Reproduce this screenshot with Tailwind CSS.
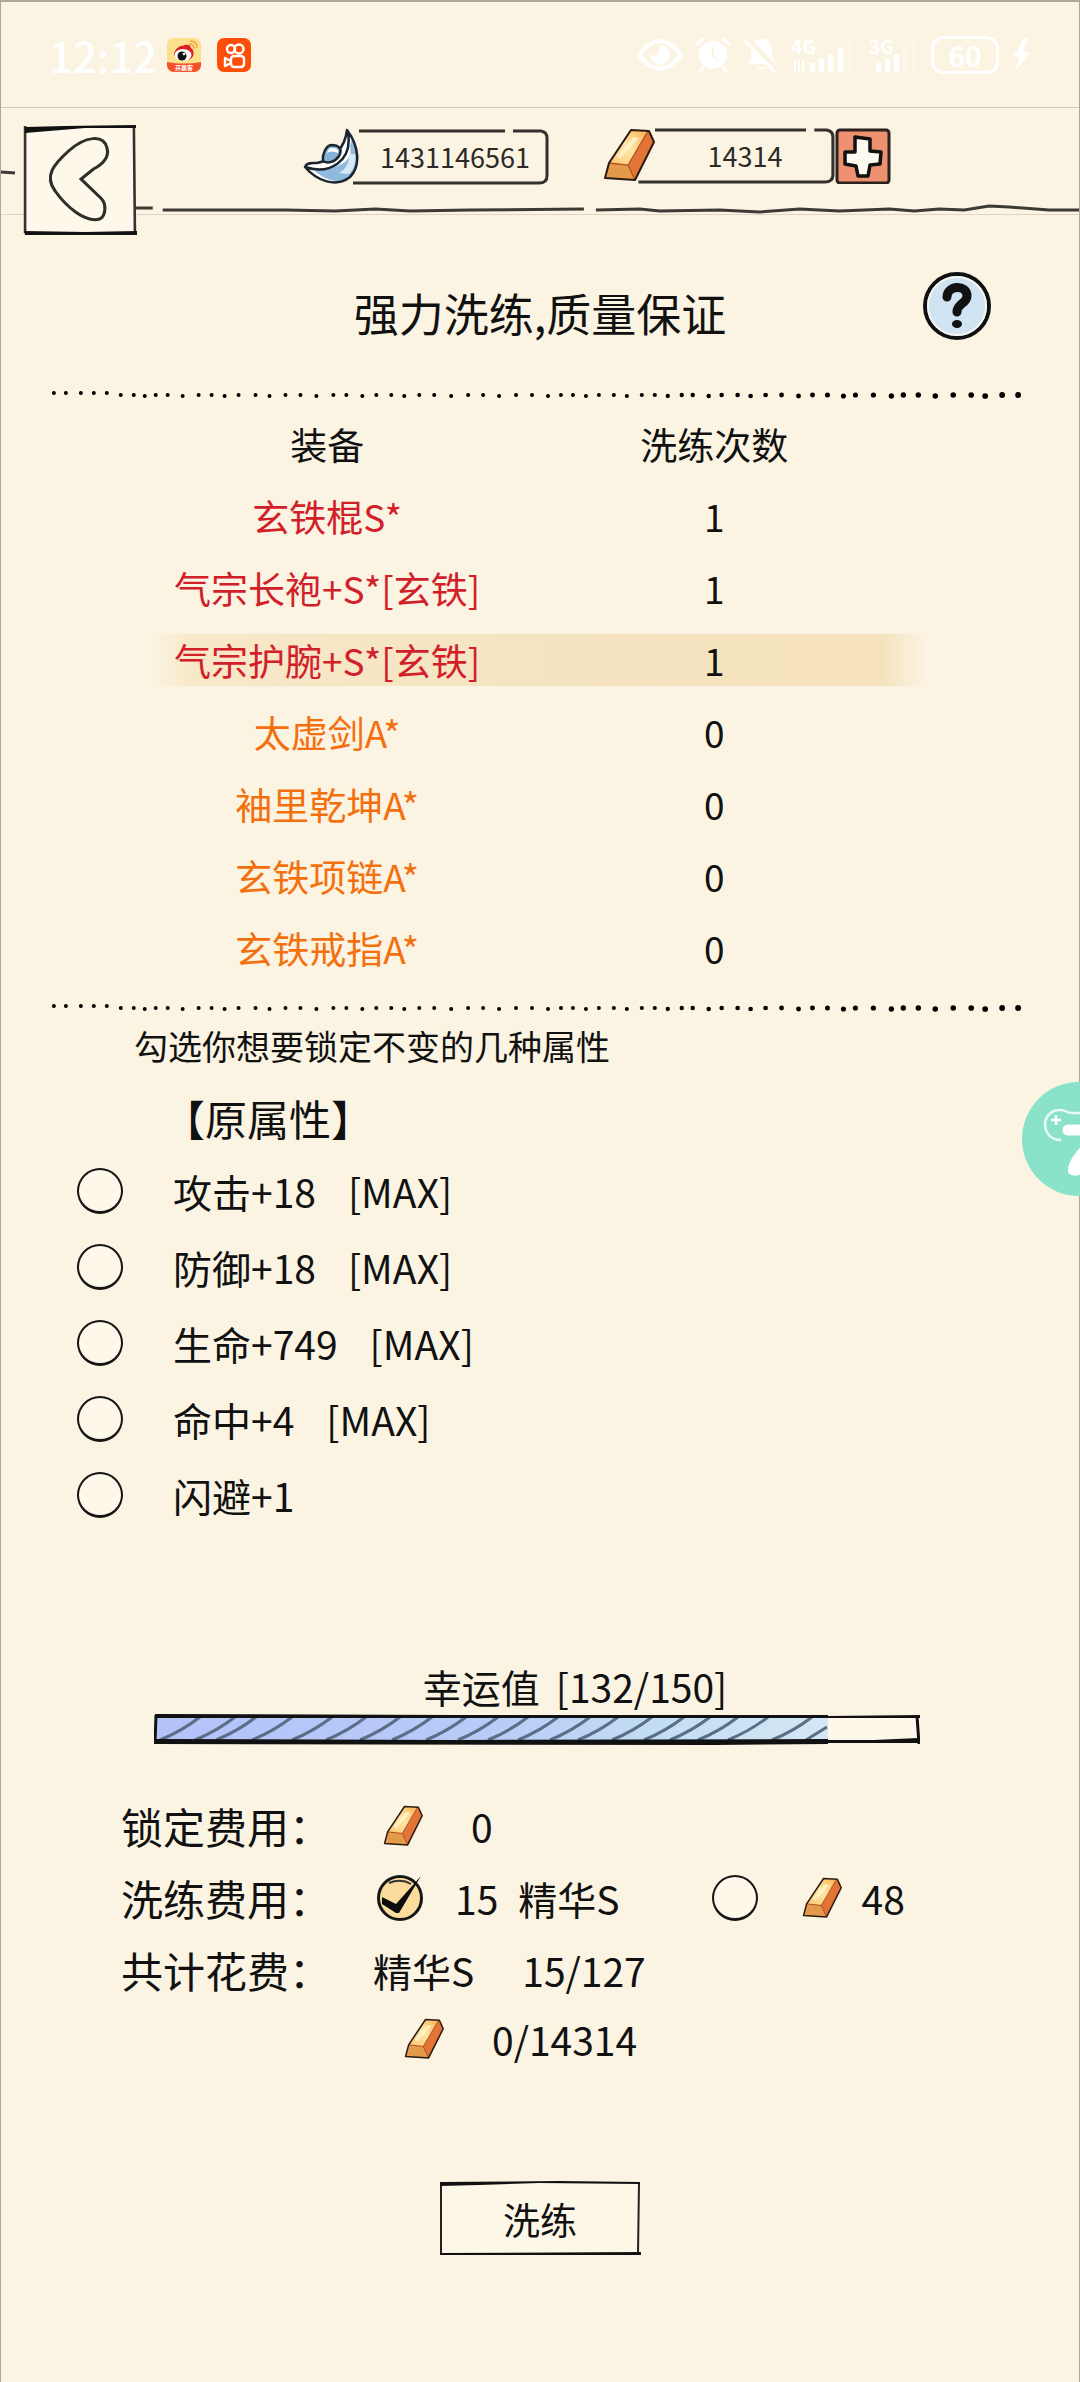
<!DOCTYPE html>
<html lang="zh-CN">
<head>
  <meta charset="UTF-8">
  <meta name="viewport" content="width=device-width, initial-scale=1.0">
  <title>强力洗练</title>
  <script src="https://cdn.jsdelivr.net/npm/@tailwindcss/browser@4"></script>
</head>
<body class="bg-[#fbf4e2] text-[#111] font-['Noto_Sans_CJK_SC','Noto_Sans',sans-serif] min-h-screen overflow-x-hidden border-t-2 border-x border-[#aea697]">

  <!-- Shared drawings -->
  <svg class="absolute w-0 h-0" aria-hidden="true">
    <defs>
      <linearGradient id="goldTop" x1="0" y1="1" x2="1" y2="0">
        <stop offset="0" stop-color="#fbc46c"/>
        <stop offset="0.5" stop-color="#ffe6a4"/>
        <stop offset="1" stop-color="#fdb352"/>
      </linearGradient>
      <linearGradient id="luckFill" x1="0" x2="1">
        <stop offset="0" stop-color="#b3c3fa"/>
        <stop offset="0.5" stop-color="#b9cbf8"/>
        <stop offset="0.75" stop-color="#c3def3"/>
        <stop offset="1" stop-color="#d3e7f5"/>
      </linearGradient>
      <symbol id="gold" viewBox="0 0 52 56">
        <path d="M28 2 46 3 51 14 32 52 2 50 6 35Z" fill="#e27438"/>
        <path d="M28 2 45 3 25 37 6 35Z" fill="url(#goldTop)"/>
        <path d="M30 9 36 10 17 31 14 28Z" fill="#fff3cf" opacity=".8"/>
        <path d="M6 35 25 37 32 52 2 50Z" fill="#e49a4b"/>
        <path d="M6 35 25 37 32 52M25 37 45 3" fill="none" stroke="#b0521f" stroke-width="1.3"/>
        <path d="M28 2 46 3 51 14 32 52 2 50 6 35Z" fill="none" stroke="#2a1a10" stroke-width="2" stroke-linejoin="round"/>
      </symbol>
    </defs>
  </svg>

  <!-- Status bar -->
  <div class="h-[106px] flex items-center pl-12 pr-12 border-b border-[#d2cbbb] text-white">
    <span class="text-[42px] leading-[60px] font-medium">12:12</span>
    <svg class="w-[34px] h-[34px] ml-2.5" viewBox="0 0 34 34">
      <defs><clipPath id="wb"><rect width="34" height="34" rx="7"/></clipPath></defs>
      <g clip-path="url(#wb)">
        <rect width="34" height="34" fill="#fde08c"/>
        <path d="M0 24Q17 27 34 24V34H0Z" fill="#f4502c"/>
        <path d="M7 16C8 11 13 7 16 8 18 6 24 6 24 10 27 12 27 16 26 18 24 24 8 24 7 16Z" fill="#dd1f26"/>
        <ellipse cx="16" cy="17" rx="8.500" ry="6" fill="#fff"/>
        <circle cx="15" cy="18" r="4.500" fill="#111"/>
        <circle cx="17" cy="16" r="1.300" fill="#fff"/>
        <path d="M22 6Q27 6 27 11M23 3Q30 3 30 10" fill="none" stroke="#eba646" stroke-width="1.500"/>
        <text x="17" y="32" font-size="6" font-weight="700" fill="#fff" text-anchor="middle">开赢客</text>
      </g>
    </svg>
    <svg class="w-[34px] h-[34px] ml-4" viewBox="0 0 34 34">
      <rect width="34" height="34" rx="7" fill="#fd4f0a"/>
      <g fill="none" stroke="#fff" stroke-width="2.400" stroke-linejoin="round">
        <circle cx="14" cy="11" r="4"/><circle cx="22" cy="11" r="4.500"/>
        <rect x="14" y="18" width="13" height="11" rx="3"/>
        <path d="M14 23 8 20V28L14 25"/>
      </g>
    </svg>
    <div class="ml-auto flex items-center gap-3">
      <svg class="w-[46px] h-[34px]" viewBox="0 0 46 34" fill="#fff">
        <path d="M2 17Q23-11 44 17 23 45 2 17Z" fill="none" stroke="#fff" stroke-width="4"/>
        <path d="M23 7a10 10 0 1 1-10 10q6 2 8-2t2-8Z"/>
      </svg>
      <svg class="w-9 h-9" viewBox="0 0 36 36" fill="none" stroke="#fff" stroke-width="3" stroke-linecap="round">
        <circle cx="18" cy="18" r="14" fill="#fff" stroke="none"/>
        <path d="M2 7 8 2M34 7 28 2M8 31 5 34M28 31 31 34"/>
        <path d="M18 11V18L22 23" stroke="#fbf4e2" stroke-width="2"/>
      </svg>
      <svg class="w-9 h-9" viewBox="0 0 36 36" fill="#fff">
        <path d="M18 2c7 0 11 5 11 11v7l4 7H5l3-7v-7C8 7 12 2 18 2ZM14 30h9q-4 6-9 0Z"/>
        <path d="M4 2 34 33" stroke="#fbf4e2" stroke-width="6"/>
        <path d="M2 4 32 35" stroke="#fff" stroke-width="3"/>
      </svg>
      <svg class="w-[66px] h-[52px]" viewBox="0 -8 66 52" fill="#fff">
        <text x="0" y="17" font-size="19" font-weight="700">4G</text>
        <path d="M4 23V35M8 23V35M12 23V35" stroke="#fff" stroke-width="2"/>
        <path d="M19 26h5v9h-5ZM28 22h5v13h-5ZM37 17h5v18h-5ZM47 10h5v25h-5Z"/>
        <path d="M57 2h5v33h-5Z" opacity=".25"/>
      </svg>
      <svg class="w-[50px] h-[52px]" viewBox="0 -8 50 52" fill="#fff">
        <text x="0" y="17" font-size="19" font-weight="700">3G</text>
        <path d="M7 26h5v9H7ZM16 22h5v13h-5ZM25 17h5v18h-5Z"/>
        <path d="M34 10h5v25h-5ZM43 2h5v33h-5Z" opacity=".25"/>
      </svg>
      <div class="w-[68px] h-[38px] border-3 border-white rounded-xl flex items-center justify-center text-[28px] leading-8 font-bold">60</div>
      <svg class="w-5 h-9" viewBox="0 0 20 36" fill="#fff"><path d="M14 0 2 20H9L3 36 19 15H12L17 2Z"/></svg>
    </div>
  </div>

  <!-- Currency header -->
  <header class="relative h-[107px] flex items-start border-b border-[#ddd6c6] pl-[22px]">
    <svg class="absolute left-0 top-[90px] w-full h-5" viewBox="0 0 1080 20" preserveAspectRatio="none" fill="none" stroke="#3c3a35" stroke-width="3">
      <path d="M131 10h21M162 12H285L335 13 375 11 410 13 470 12 584 11M596 12 640 11 660 13 720 12 760 14 800 11 840 13 890 11 915 13 940 11 965 12 990 8 1010 9 1050 12H1080"/>
    </svg>
    <svg class="absolute left-0 top-[60px] w-[22px] h-2" viewBox="0 0 22 8" stroke="#3c3a35" stroke-width="3"><path d="M0 4 14 5"/></svg>

    <button type="button" aria-label="返回" class="relative mt-4 w-[114px] h-[112px]">
      <svg class="w-full h-full" viewBox="0 0 110 112" preserveAspectRatio="none">
        <path d="M2 3 108 2V108H2Z" fill="#fdf8ea"/>
        <path d="M2 2V109M107 4 108 108" stroke="#333" stroke-width="2.500"/>
        <path d="M2 3 40 2 109 1V4L60 4 2 9Z" fill="#111"/>
        <path d="M1 107 60 108 110 107V111H2Z" fill="#111"/>
        <path d="M44 27C60 12 78 10 81 24 84 33 76 41 68 45L56 55 75 74C81 80 80 92 74 95 60 99 42 83 31 67 20 52 30 40 44 27Z" fill="none" stroke="#2e2e2b" stroke-width="3"/>
      </svg>
    </button>

    <div class="relative ml-[166px] mt-5 flex items-center">
      <svg class="w-[58px] h-[58px]" viewBox="0 0 58 58">
        <path d="M44 2C56 18 58 38 47 49 33 60 14 53 2 39 4 34 10 35 14 35 30 32 42 20 44 2Z" fill="#fff"/>
        <path d="M47 18C51 34 34 42 10 41 22 53 36 57 47 48 56 40 55 24 49 11Z" fill="#8fb9de"/>
        <path d="M46 26Q47 39 36 45L46 46Q54 38 52 26Z" fill="#d8e9f5"/>
        <path d="M44 2C56 18 58 38 47 49 33 60 14 53 2 39 4 34 10 35 14 35 30 32 42 20 44 2ZM2 39C26 47 50 34 45 4" fill="none" stroke="#1c2430" stroke-width="2.500" stroke-linejoin="round"/>
        <path d="M20 33C19 26 23 18 28 17 36 17 40 21 36 28 32 34 25 36 20 33Z" fill="#86b2d9" stroke="#1c2430" stroke-width="2.500"/>
        <path d="M24 25Q26 19 30 20 36 20 35 25 28 22 24 25Z" fill="#fff"/>
      </svg>
      <div class="relative w-[188px] h-[54px] flex items-center justify-center text-[27px] leading-9 text-[#2c2a26]">
        <svg class="absolute inset-0 w-full h-full overflow-visible" viewBox="0 0 188 54" preserveAspectRatio="none" fill="none" stroke="#33312c" stroke-width="3">
          <path d="M-2 1H144M152 1H180Q186 2 186 8V46Q186 53 178 53H-8"/>
        </svg>
        <span class="relative">1431146561</span>
      </div>
    </div>

    <div class="relative ml-[54px] mt-5 flex items-center">
      <svg class="w-[52px] h-14"><use href="#gold"/></svg>
      <div class="relative w-[180px] h-[54px] flex items-center justify-center text-[27px] leading-9 text-[#2c2a26]">
        <svg class="absolute inset-0 w-full h-full overflow-visible" viewBox="0 0 174 54" preserveAspectRatio="none" fill="none" stroke="#33312c" stroke-width="3">
          <path d="M0 1H146M154 1H166Q172 2 172 8V46Q172 53 164 53H-16"/>
        </svg>
        <span class="relative">14314</span>
      </div>
      <button type="button" aria-label="充值" class="w-14 h-14">
        <svg class="w-full h-full" viewBox="0 0 56 56">
          <rect x="2" y="2" width="52" height="53" rx="3" fill="#ee9170" stroke="#2b211d" stroke-width="3"/>
          <path d="M20 9 35 11V23L46 24 45 36 35 37 33 48H23L21 38 10 36V24L20 24Z" fill="#fffaf0" stroke="#111" stroke-width="3.500" stroke-linejoin="round"/>
        </svg>
      </button>
    </div>
  </header>

  <main>
    <!-- Title -->
    <div class="grid grid-cols-[1fr_auto_1fr] items-start pt-14">
      <h1 class="col-start-2 text-[45px] leading-[84px]">强力洗练,质量保证</h1>
      <button type="button" aria-label="帮助" class="w-[70px] h-[70px] justify-self-end mr-[87px]">
        <svg class="w-full h-full" viewBox="0 0 70 70">
          <circle cx="35" cy="35" r="32" fill="#cfe3f2" stroke="#111" stroke-width="4"/>
          <circle cx="35" cy="35" r="29" fill="none" stroke="#f3f5f0" stroke-width="2"/>
          <path d="M25 26C25 14 45 13 45 25 45 33 35 32 35 41" fill="none" stroke="#111" stroke-width="9" stroke-linecap="round"/>
          <ellipse cx="35" cy="53" rx="5" ry="4" fill="#111"/>
        </svg>
      </button>
    </div>

    <svg class="dots block w-full h-5 mt-[30px]" viewBox="0 0 1080 20"></svg>

    <!-- Equipment list -->
    <div class="px-[152px] mt-[3px]">
      <table class="w-full table-fixed text-[37px] leading-[54px] text-center">
        <colgroup><col class="w-[45%]"><col class="w-[55%]"></colgroup>
        <thead>
          <tr class="h-[72px]"><th class="font-normal">装备</th><th class="font-normal">洗练次数</th></tr>
        </thead>
        <tbody>
          <tr class="h-[72px]"><td class="text-[#d2202a]">玄铁棍S*</td><td>1</td></tr>
          <tr class="h-[72px]"><td class="text-[#d2202a]">气宗长袍+S*[玄铁]</td><td>1</td></tr>
          <tr class="h-[72px] bg-[linear-gradient(90deg,#f6e6c300,#f7e8c8_5%,#f5e3bf_60%,#f5e2bd_94%,#f6e6c300)] bg-[length:100%_52px] bg-center bg-no-repeat"><td class="text-[#d2202a]">气宗护腕+S*[玄铁]</td><td>1</td></tr>
          <tr class="h-[72px]"><td class="text-[#f4700f]">太虚剑A*</td><td>0</td></tr>
          <tr class="h-[72px]"><td class="text-[#f4700f]">袖里乾坤A*</td><td>0</td></tr>
          <tr class="h-[72px]"><td class="text-[#f4700f]">玄铁项链A*</td><td>0</td></tr>
          <tr class="h-[72px]"><td class="text-[#f4700f]">玄铁戒指A*</td><td>0</td></tr>
        </tbody>
      </table>
    </div>

    <svg class="dots block w-full h-5 mt-3.5" viewBox="0 0 1080 20"></svg>

    <!-- Attribute locks -->
    <p class="pl-[133px] mt-1 text-[34px] leading-[48px]">勾选你想要锁定不变的几种属性</p>
    <fieldset class="pl-[76px]">
      <legend class="pl-[86px] pt-[13px] text-[42px] leading-[70px]">【原属性】</legend>
      <label class="flex items-center h-[76px] text-[39px] leading-[54px]">
        <input type="checkbox" class="appearance-none size-[46px] rounded-full bg-[#fdf8ea] border-2 border-b-3 border-[#161616] mr-[50px]">
        攻击+18<span class="ml-8">[MAX]</span>
      </label>
      <label class="flex items-center h-[76px] text-[39px] leading-[54px]">
        <input type="checkbox" class="appearance-none size-[46px] rounded-full bg-[#fdf8ea] border-2 border-b-3 border-[#161616] mr-[50px]">
        防御+18<span class="ml-8">[MAX]</span>
      </label>
      <label class="flex items-center h-[76px] text-[39px] leading-[54px]">
        <input type="checkbox" class="appearance-none size-[46px] rounded-full bg-[#fdf8ea] border-2 border-b-3 border-[#161616] mr-[50px]">
        生命+749<span class="ml-8">[MAX]</span>
      </label>
      <label class="flex items-center h-[76px] text-[39px] leading-[54px]">
        <input type="checkbox" class="appearance-none size-[46px] rounded-full bg-[#fdf8ea] border-2 border-b-3 border-[#161616] mr-[50px]">
        命中+4<span class="ml-8">[MAX]</span>
      </label>
      <label class="flex items-center h-[76px] text-[39px] leading-[54px]">
        <input type="checkbox" class="appearance-none size-[46px] rounded-full bg-[#fdf8ea] border-2 border-b-3 border-[#161616] mr-[50px]">
        闪避+1
      </label>
    </fieldset>

    <!-- Luck -->
    <div class="mt-32 pl-[153px] pr-[159px]">
      <p class="flex justify-center gap-4 pl-[76px] text-[39px] leading-[50px]"><span>幸运值</span><span>[132/150]</span></p>
      <div role="progressbar" aria-label="幸运值" aria-valuenow="132" aria-valuemin="0" aria-valuemax="150" class="mt-[2px]">
        <svg class="block w-full h-8" viewBox="0 0 766 32" preserveAspectRatio="none">
          <rect x="3" y="4" width="760" height="24" fill="#fdf8ea"/>
          <rect x="3" y="4" width="671" height="24" fill="url(#luckFill)"/>
          <g id="hatch" fill="none" stroke="#5a6f86" stroke-width="3"></g>
          <path d="M2 2 1 31M763 3 765 31" stroke="#111" stroke-width="3"/>
          <path d="M1 1 300 2 674 2V5H1Z" fill="#111"/>
          <path d="M1 26 300 27 674 26V31L560 32 1 31Z" fill="#111"/>
          <path d="M674 3 766 2V5H674ZM674 27 720 27 764 25 765 30 674 30Z" fill="#111"/>
        </svg>
      </div>
    </div>

    <!-- Costs -->
    <div class="mt-[45px] pl-[120px] text-[39px] leading-[54px]">
      <div class="flex items-center h-[72px]">
        <span class="w-[252px] text-[42px]">锁定费用：</span>
        <svg class="w-10 h-[43px] ml-2.5"><use href="#gold"/></svg>
        <span class="ml-12">0</span>
      </div>
      <div class="flex items-center h-[72px]">
        <span class="w-[252px] text-[42px]">洗练费用：</span>
        <label class="flex items-center">
          <span class="relative ml-1 size-[46px]">
            <input type="radio" name="pay" checked class="block appearance-none size-[46px] rounded-full bg-[#fbdc9c] border-3 border-[#161616]">
            <svg class="absolute inset-0 pointer-events-none" viewBox="0 0 46 46">
              <path d="M12 8Q24 3 34 9" fill="none" stroke="#333" stroke-width="2"/>
              <path d="M5 22 19 29 44 1 22 38H19L5 29Z" fill="#0c0c0c"/>
            </svg>
          </span>
          <span class="ml-8">15</span>
          <span class="ml-5">精华S</span>
        </label>
        <label class="flex items-center ml-[92px]">
          <input type="radio" name="pay" class="appearance-none size-[46px] rounded-full bg-[#fdf8ea] border-2 border-b-3 border-[#161616]">
          <svg class="w-10 h-[43px] ml-11"><use href="#gold"/></svg>
          <span class="ml-5">48</span>
        </label>
      </div>
      <div class="flex items-center h-[72px]">
        <span class="w-[252px] text-[42px]">共计花费：</span>
        <span>精华S</span>
        <span class="ml-12">15/127</span>
      </div>
      <div class="flex items-center h-[66px] pl-[283px]">
        <svg class="w-10 h-[43px]"><use href="#gold"/></svg>
        <span class="ml-12">0/14314</span>
      </div>
    </div>

    <button type="button" class="relative block mx-auto mt-[109px] w-[202px] h-[75px] text-[37px] leading-[54px]">
      <svg class="absolute inset-0 w-full h-full" viewBox="0 0 202 75">
        <path d="M2 3 200 2V72H2Z" fill="#fdf7e8"/>
        <path d="M2 1 2 73M200 2 199 73" stroke="#222" stroke-width="2"/>
        <path d="M1 1 120 0 201 1V3L100 2 40 4 1 5Z" fill="#111"/>
        <path d="M1 72 202 71V74H1Z" fill="#111"/>
      </svg>
      <span class="relative">洗练</span>
    </button>
  </main>

  <!-- Floating game assistant -->
  <button type="button" aria-label="游戏助手" class="absolute right-0 top-[1082px] w-[58px] h-[115px] overflow-hidden">
    <svg class="absolute left-0 top-0 w-[115px] h-[115px]" viewBox="0 0 115 115">
      <circle cx="57" cy="57" r="57" fill="#8ae2c9"/>
      <path d="M39 58C18 58 18 28 38 28 44 28 44 31 50 31H80" fill="none" stroke="#e9fbf3" stroke-width="2.500"/>
      <path d="M34 33V43M29 38H39" stroke="#fff" stroke-width="2.500"/>
      <path d="M46 48H90" stroke="#fff" stroke-width="11" stroke-linecap="round"/>
      <path d="M47 92C43 84 52 70 66 58V84Q58 98 47 92Z" fill="#fff"/>
    </svg>
  </button>

  <script>
    const NS = 'http://www.w3.org/2000/svg';

    // Hand-drawn dotted rule: dot centres, getting heavier towards the right
    const dotX = [53, 65, 80, 93, 106, 120, 133, 144, 155, 167, 182, 198, 211, 224, 238, 255, 269, 285, 300, 316, 333, 346, 362,
      376, 391, 404, 419, 434, 451, 468, 483, 499, 516, 532, 548, 561, 573, 586, 599, 614, 627, 642, 655, 668, 682, 693, 709,
      722, 738, 751, 766, 782, 799, 813, 828, 844, 856, 874, 892, 904, 919, 936, 954, 972, 986, 1003, 1019];
    document.querySelectorAll('.dots').forEach(svg => {
      dotX.forEach((x, i) => {
        const dot = document.createElementNS(NS, 'circle');
        dot.setAttribute('cx', x);
        dot.setAttribute('cy', i < 5 ? 8 : 10 + (i % 3 === 1 ? 1 : 0));
        dot.setAttribute('r', x < 600 ? 2 : 2 + (x - 600) / 450);
        svg.appendChild(dot);
      });
    });

    // Hatching of the luck bar
    const hatch = document.getElementById('hatch');
    [6, 41, 62, 98, 138, 172, 206, 238, 272, 304, 334, 364, 396, 424, 458, 490, 516, 544, 574, 618].forEach(x => {
      const line = document.createElementNS(NS, 'path');
      line.setAttribute('d', `M${x} 27Q${x + 22} 18 ${x + 40} 4`);
      hatch.appendChild(line);
    });
    const last = document.createElementNS(NS, 'path');
    last.setAttribute('d', 'M652 27 673 14');
    hatch.appendChild(last);
  </script>
</body>
</html>
